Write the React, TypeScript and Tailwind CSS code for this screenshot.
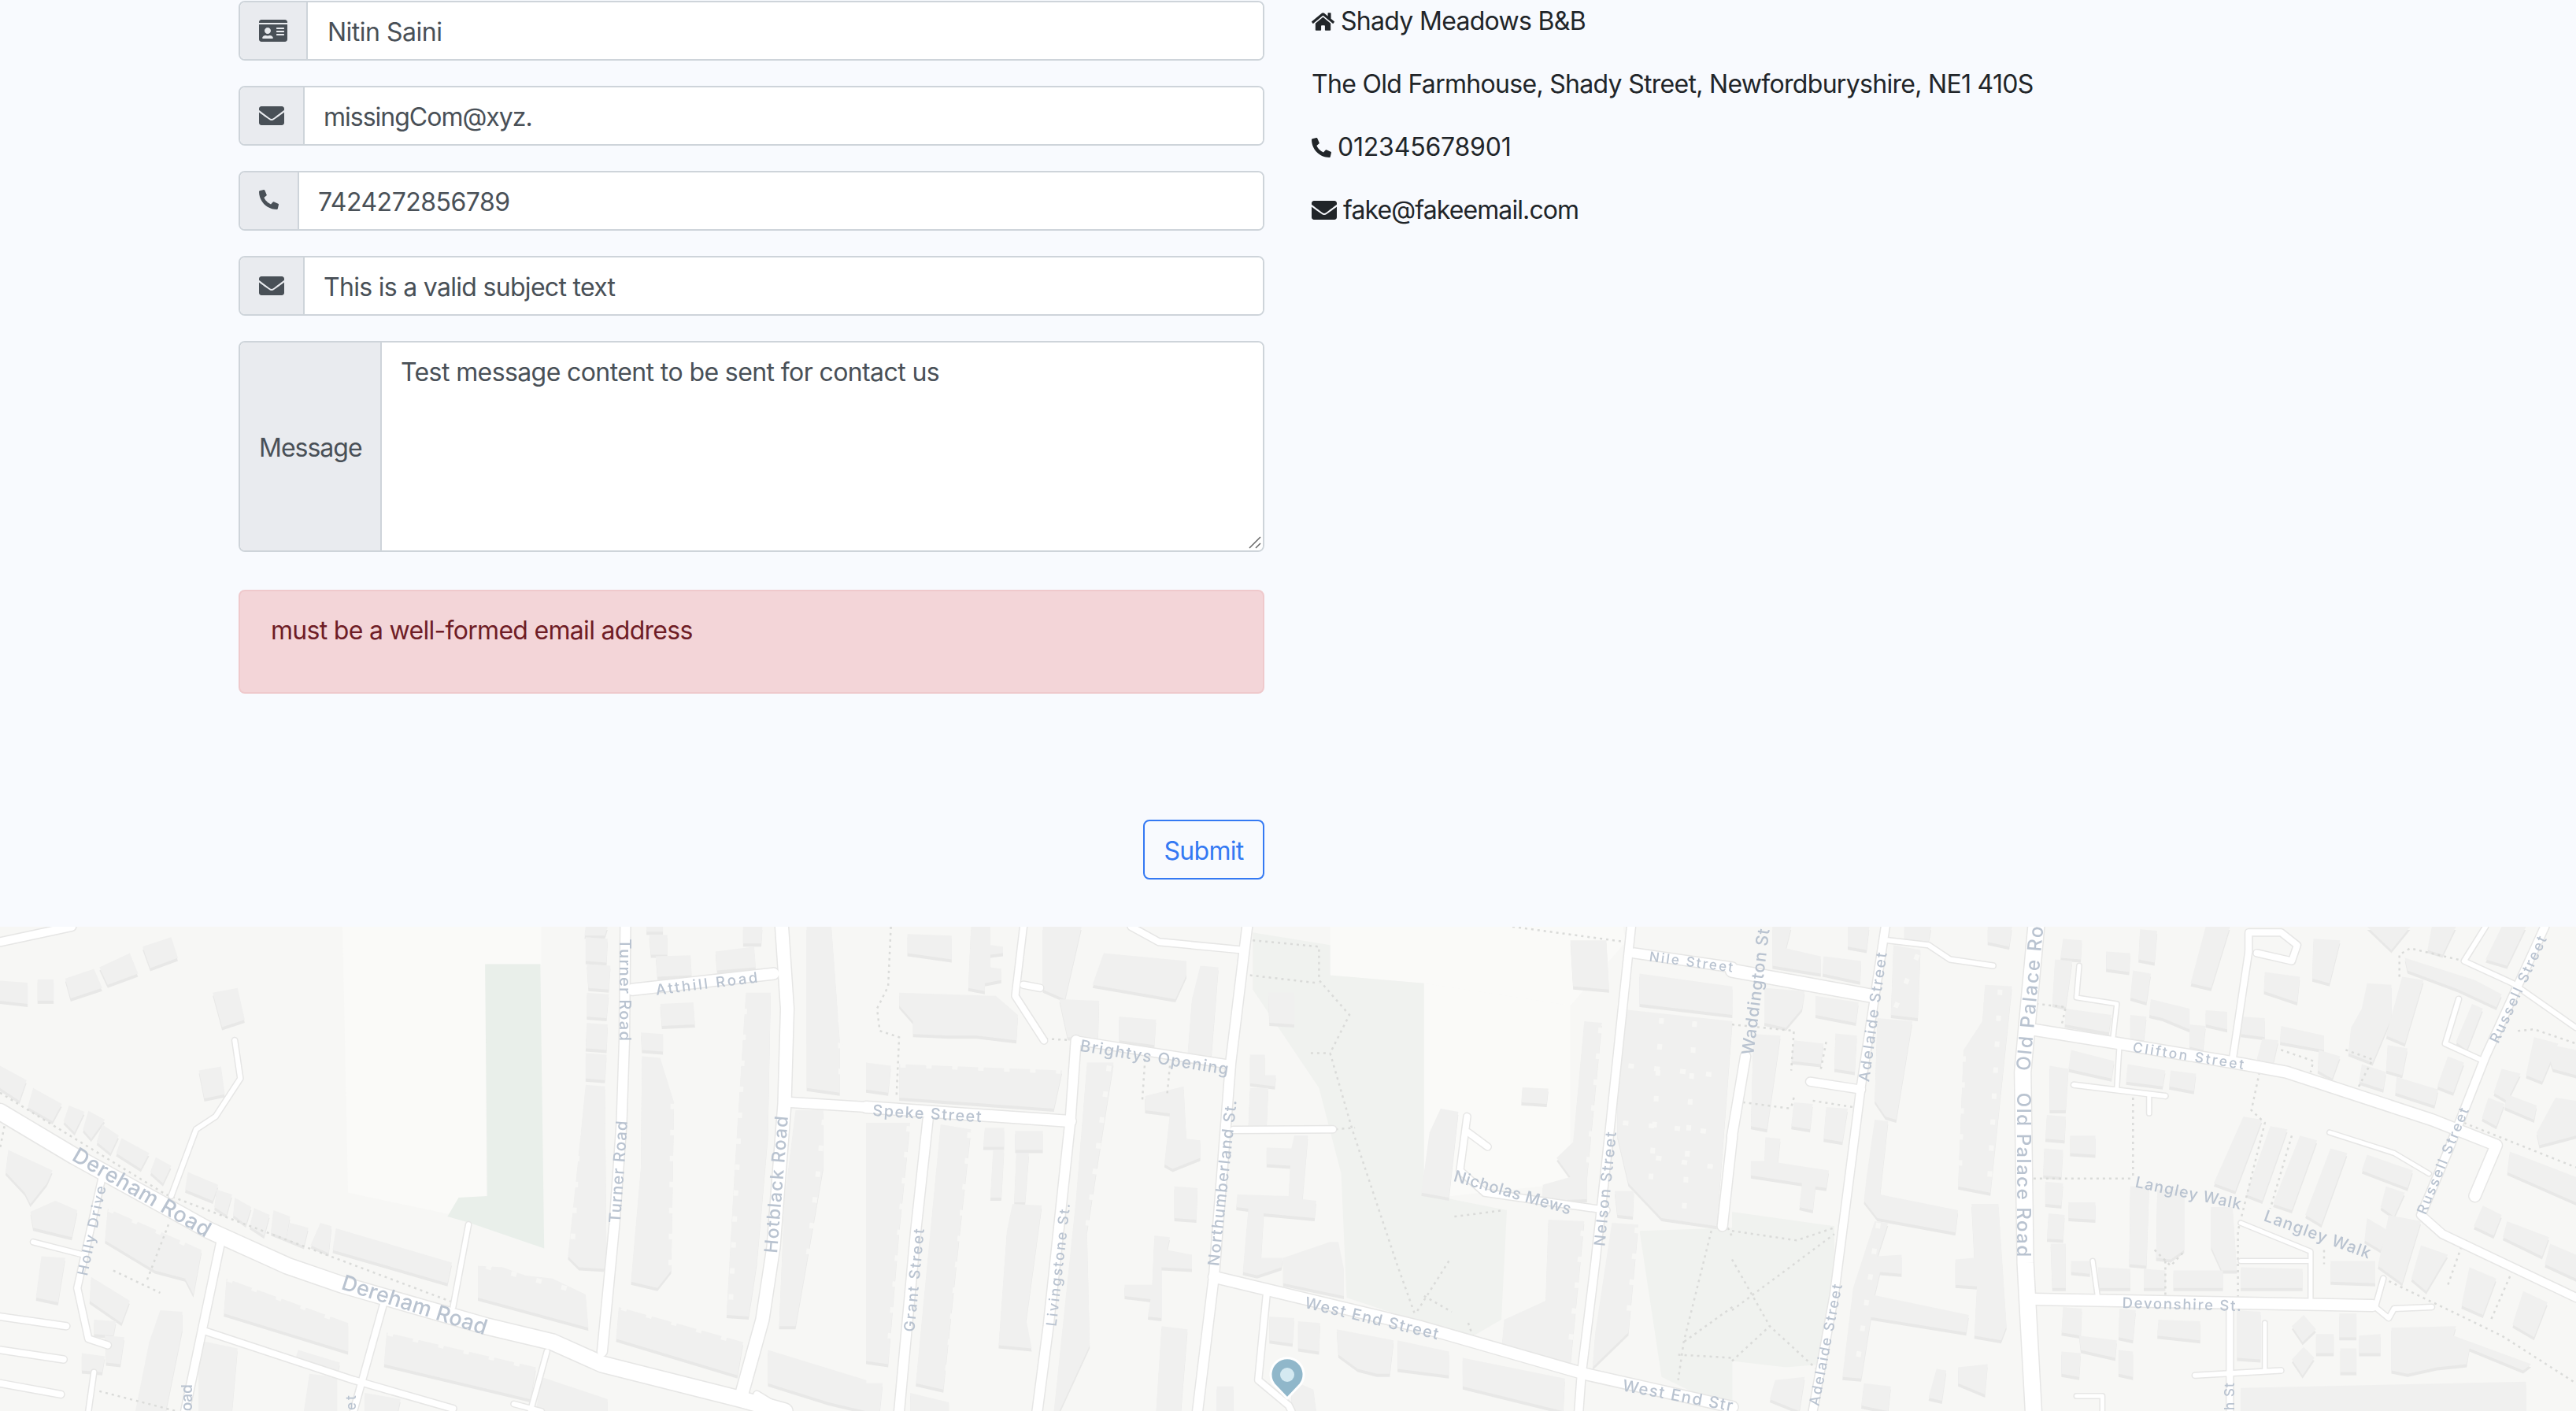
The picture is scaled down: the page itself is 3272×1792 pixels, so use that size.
import { FaEnvelope, FaHome, FaIdCard, FaPhoneAlt } from "react-icons/fa";

type Panel = {
  x0: number;
  sx: number;
  light: string[];
  green: string[];
  blocks: string[];
  notches: string[];
  dots: string[];
  roads: [number, string][];
  labels: [string, number, number, number, number][];
};

const SY = 2.48;

const panels: Panel[] = [
  {
    x0: 0,
    sx: 1.425,
    light: ["620 42 980 42 980 160 880 160 880 890 820 950 630 880"],
    green: ["878 160 978 160 985 1055 850 975 810 955 830 895 882 890"],
    blocks: [
      "0 212 50 218 50 285 0 275", "68 208 97 208 97 275 68 275", "118 205 170 175 185 235 128 268", "180 170 235 125 250 190 195 225",
      "258 105 310 75 322 140 272 172", "385 250 430 235 443 335 402 358", "360 495 400 482 407 570 370 583",
      "0 480 48 525 35 590 0 550", "60 550 112 600 95 655 50 610", "125 605 153 625 135 690 115 655", "160 622 190 650 165 710 150 680",
      "185 665 215 700 200 755 175 720", "220 708 270 755 255 805 210 755", "282 768 310 795 295 850 272 815", "340 815 395 855 385 905 335 870",
      "392 870 420 885 410 950 388 925", "425 895 455 925 445 980 422 950", "460 928 488 950 478 1015 452 985", "495 935 525 955 518 1025 490 1005",
      "525 975 558 990 550 1048 518 1025", "580 975 600 985 595 1070 562 1045", "608 992 818 1100 810 1165 602 1060",
      "15 745 95 810 85 850 55 915 45 880 10 815", "55 940 100 905 140 935 130 1020 60 990", "195 930 365 1060 350 1200 335 1150 280 1125 190 1030",
      "75 1080 118 1085 105 1225 65 1210", "165 1145 235 1220 220 1290 162 1220", "290 1250 330 1255 330 1310 300 1568 245 1568 270 1350",
      "410 1150 630 1290 630 1380 405 1260", "540 1375 615 1415 612 1445 535 1400", "700 1320 970 1430 960 1530 695 1420", "980 1460 1100 1530 1100 1568 970 1568",
      "360 1345 430 1370 420 1568 360 1568", "148 1385 190 1395 185 1445 148 1440", "170 1280 210 1285 205 1330 170 1325", "190 1330 225 1335 218 1420 192 1415",
      "560 1450 610 1460 610 1568 550 1568", "660 1510 725 1530 720 1568 660 1568",
      "1060 42 1100 42 1095 70 1058 70", "1060 75 1100 80 1098 155 1060 150", "1062 160 1105 165 1102 240 1065 235", "1062 250 1102 255 1098 330 1062 325",
      "1062 345 1100 350 1098 430 1060 425", "1060 440 1098 445 1095 525 1060 520", "1060 540 1095 545 1098 1120 1048 1115 1028 1080 1045 800",
      "1160 375 1200 380 1200 435 1162 430", "1162 450 1195 455 1220 595 1215 1125 1190 1180 1142 1160 1160 800", "1195 285 1255 280 1258 350 1198 355",
      "1187 135 1250 132 1252 195 1190 200", "1295 120 1365 105 1368 170 1298 180", "1175 68 1208 68 1208 130 1178 130", "1170 42 1200 42 1200 58 1170 58",
      "1345 42 1380 42 1378 95 1345 95", "1350 250 1395 250 1390 700 1370 1100 1355 1270 1315 1265 1330 800", "1460 42 1505 42 1520 400 1520 565 1460 550",
      "1440 620 1490 620 1490 800 1460 1100 1440 1300 1410 1300 1420 900", "865 1110 910 1115 950 1140 1000 1150 1060 1200 1065 1305 865 1210",
      "1120 1240 1345 1350 1335 1455 1115 1340", "1390 1375 1568 1470 1568 1568 1500 1540 1390 1480",
    ],
    notches: [
      "1050 600 1035 1080", "1218 600 1214 1120", "1348 300 1322 1250", "1520 80 1522 560", "1492 650 1462 1090",
      "880 1112 1060 1198", "1125 1242 1340 1352", "197 932 362 1062", "412 1152 628 1292", "702 1322 968 1432",
    ],
    dots: ["0 565 300 885 820 1225", "305 980 265 1160", "205 1125 290 1195", "8 670 0 740", "180 1505 320 1568"],
    roads: [
      [20, "0 625 135 765 380 1000 520 1110 620 1170 880 1300 1000 1350 1090 1420 1340 1530 1420 1568"],
      [10, "0 90 130 42"],
      [12, "1132 42 1130 400 1125 660 1112 980 1090 1380"],
      [14, "1145 240 1400 190"],
      [16, "1415 42 1425 300 1420 600 1400 1050 1380 1280 1340 1530"],
      [12, "1430 595 1568 610"],
      [6, "425 400 435 520 390 640 355 680 310 890"],
      [6, "848 980 820 1240"],
      [8, "185 830 140 1180 160 1340 195 1360"],
      [6, "60 1035 150 1075"],
      [10, "400 1030 335 1568"],
      [8, "370 1315 640 1470 820 1560"],
      [8, "695 1225 640 1568"],
      [6, "990 1380 960 1568"],
      [8, "0 1270 120 1300"],
      [8, "0 1375 115 1405"],
      [8, "0 1480 110 1515"],
      [6, "170 1445 160 1568"],
      [6, "930 1545 980 1568"],
      [8, "1370 1515 1420 1568"],
    ],
    labels: [
      ["Turner Road", 1132, 80, 1132, 400],
      ["Atthill Road", 1187, 240, 1370, 200],
      ["Turner Road", 1112, 975, 1125, 655],
      ["Hotblack Road", 1395, 1070, 1415, 640],
      ["Dereham Road", 135, 755, 378, 1000],
      ["Dereham Road", 620, 1160, 880, 1305],
      ["Holly Drive", 148, 1140, 182, 860],
      ["oad", 338, 1568, 338, 1485],
      ["et", 635, 1565, 635, 1520],
    ],
  },
  {
    x0: 1100,
    sx: 1.425,
    light: ["840 42 1370 42 1375 90 1275 290 1010 220 840 195", "1010 220 1275 290 1275 850 1060 890 1010 880"],
    green: [
      "700 60 840 100 840 195 1010 220 1010 880 1060 900 1160 935 1150 1280 1100 1330 990 1280 870 1210 860 820 820 550 700 240",
      "1400 1000 1568 990 1568 1568 1440 1460",
    ],
    blocks: [
      "75 65 155 70 155 145 75 125", "190 42 225 42 225 100 248 105 248 125 225 130 225 170 245 175 245 210 215 220 215 245 185 235", "320 42 390 42 360 270 320 240",
      "430 125 580 150 580 195 560 270 410 225", "60 250 235 260 275 320 272 400 200 385 150 385 85 380 85 340 60 290", "350 270 422 275 420 400 365 390",
      "458 325 525 335 522 415 458 400", "605 165 638 170 625 450 582 445 590 270", "60 475 355 495 340 615 60 580", "0 470 45 480 40 565 0 555",
      "0 660 80 660 60 1000 40 1420 0 1410", "135 665 190 680 170 1000 140 1500 90 1480", "215 675 250 675 250 735 212 735", "270 685 320 685 320 745 270 745",
      "230 745 250 745 245 895 225 895", "272 755 295 755 288 910 268 910", "265 915 318 920 290 1280 300 1370 240 1360 255 1000",
      "400 470 448 470 400 1000 405 1360 350 1568 340 1568 380 900", "505 575 575 545 580 710 605 715 605 770 555 805 540 790 550 630 505 620",
      "558 860 600 865 598 965 558 960", "522 1015 550 1020 545 1060 590 1075 590 1120 535 1115 535 1275 510 1270 515 1215 468 1205 468 1170 518 1170",
      "535 1300 582 1310 570 1568 525 1568", "695 445 722 445 722 510 742 510 740 545 695 535", "695 550 728 550 725 670 692 670", "728 250 775 250 775 350 730 345",
      "725 738 770 740 775 700 800 700 790 900 815 905 812 960 720 945 715 1085 755 1085 752 1115 708 1140 682 1130 692 930 670 925 672 885 765 890 768 795 725 790",
      "755 1085 840 1035 855 1035 865 1120 865 1205 755 1165", "730 1270 775 1275 772 1355 730 1345", "782 1285 822 1290 820 1380 782 1370",
      "852 1310 955 1345 948 1450 925 1450 890 1435 855 1390", "962 1345 1055 1380 1055 1455 962 1435", "1080 1400 1265 1465 1262 1568 1080 1490",
      "1188 548 1235 552 1232 600 1186 595", "1300 340 1332 345 1305 830 1305 900 1225 905 1225 855 1275 830 1250 770 1280 720", "1040 615 1072 625 1055 895 1005 880 1020 690",
      "1275 85 1340 85 1345 240 1280 230", "1400 190 1568 230 1568 320 1400 285", "1360 300 1568 340 1540 985 1440 960 1380 850 1360 700", "1355 875 1390 875 1388 955 1360 950",
      "1235 965 1300 970 1275 1420 1150 1380 1155 1280 1230 1220", "1350 975 1398 980 1380 1320 1315 1430 1320 1320", "635 1490 665 1490 665 1568 635 1568",
      "0 1480 30 1480 25 1568 0 1568", "80 1510 150 1540 150 1568 80 1568", "770 1470 810 1500 815 1568 770 1568",
    ],
    notches: [
      "440 480 400 1000", "188 690 145 1480", "78 670 40 1400", "62 478 352 498", "1298 1000 1272 1400", "1396 990 1378 1300", "1330 360 1306 820",
      "1440 330 1420 850", "1500 340 1480 960", "1380 480 1540 510", "1370 660 1540 690", "1430 770 1540 800",
    ],
    dots: [
      "700 85 820 105 820 210 875 320 840 440 880 680 960 1100 995 1270", "695 195 820 220", "805 440 840 440", "850 680 885 675", "1065 955 1155 935",
      "1055 1095 995 1260", "1010 1205 1060 1255", "1090 1290 1100 1340", "1170 42 1375 90", "45 42 40 230 20 300 25 370 60 390 55 580", "325 395 380 400",
      "505 460 500 590", "550 480 545 570", "1530 1000 1480 1350 1470 1470", "1568 1240 1480 1350", "1470 1390 1568 1400", "1560 990 1568 1020",
    ],
    roads: [
      [8, "285 42 270 260 322 400"],
      [8, "285 225 315 235"],
      [8, "480 42 530 90 680 115"],
      [12, "690 42 660 470 630 1140 600 1568"],
      [10, "380 400 655 475"],
      [12, "380 400 370 650 330 1300 310 1568"],
      [14, "0 610 370 655"],
      [12, "112 650 90 1000 60 1568"],
      [8, "665 682 845 680"],
      [14, "630 1145 1000 1300 1300 1450 1568 1555"],
      [8, "725 1200 710 1470 765 1550 770 1568"],
      [8, "1088 640 1075 810 1120 880 1340 935"],
      [8, "1090 690 1125 735"],
      [10, "1385 42 1345 700 1320 1100 1295 1450 1290 1568"],
      [12, "1390 125 1568 170"],
      [12, "1568 700 1550 985"],
    ],
    labels: [
      ["Brightys Opening", 388, 415, 655, 490],
      ["Speke Street", 12, 620, 208, 640],
      ["Northumberland St.", 628, 1110, 660, 590],
      ["Livingstone St.", 335, 1300, 360, 915],
      ["Grant Street", 78, 1318, 96, 995],
      ["Nicholas Mews", 1065, 825, 1275, 930],
      ["West End Street", 795, 1225, 1035, 1325],
      ["West End Str", 1370, 1485, 1568, 1550],
      ["Nelson Street", 1327, 1048, 1348, 690],
      ["Nile Street", 1418, 135, 1568, 170],
    ],
  },
  {
    x0: 2200,
    sx: 1.4627,
    light: [],
    green: ["0 940 190 985 190 1200 170 1420 100 1430 0 1410"],
    blocks: [
      "75 42 110 42 100 110 165 135 165 190 75 165", "215 42 255 42 250 115 215 105", "170 135 240 150 238 215 168 190", "320 42 370 42 365 90 320 80", "475 42 520 42 515 105 475 90",
      "60 235 135 245 130 300 100 360 60 345", "155 260 235 280 230 345 155 320", "300 100 350 115 345 330 295 320", "470 225 520 230 480 880 420 860 430 430 465 340",
      "40 380 90 385 65 680 35 670", "115 400 170 410 165 475 110 465", "192 378 232 385 228 500 190 490", "270 330 335 340 305 650 285 640 265 590", "115 595 150 600 145 680 110 670",
      "175 610 215 615 205 720 170 710", "62 705 90 710 85 785 180 810 175 865 155 860 150 935 125 925 130 850 35 825 35 780 60 780",
      "265 650 290 655 275 885 420 935 415 1005 270 960 245 905 250 830", "445 915 495 915 510 1300 500 1345 450 1330 455 1175 415 1170 415 1090 450 1085",
      "265 970 290 975 270 1080 315 1075 315 1135 275 1130 265 1200 240 1465 205 1460 225 1180", "258 1200 440 1265 435 1320 252 1270", "380 1435 398 1440 390 1535 365 1525",
      "420 1430 475 1420 470 1515 420 1480", "80 1470 135 1460 125 1568 70 1530", "245 1480 295 1490 290 1568 240 1550",
      "615 80 650 85 648 145 610 140", "600 145 632 150 620 295 595 285", "620 300 705 320 700 375 618 350", "695 120 740 125 738 185 695 175", "758 50 790 55 785 155 755 145",
      "745 180 778 190 770 280 740 265", "778 270 850 300 850 365 800 330 775 320", "880 42 925 42 890 235 852 220", "880 305 920 310 920 365 880 350", "740 320 770 325 765 400 740 395",
      "850 350 880 355 875 430 850 420", "945 325 990 330 990 390 945 380", "985 395 1015 400 1005 475 975 460", "1020 355 1100 385 1100 430 1018 405", "1090 430 1130 450 1115 520 1088 495",
      "1080 80 1130 85 1110 220 1078 205", "990 185 1055 200 1050 280 988 245", "1180 42 1260 42 1225 115", "630 430 710 465 705 520 625 490", "735 475 805 495 800 545 732 530",
      "815 495 862 505 858 560 812 545", "590 480 625 490 620 620 590 620", "585 635 620 640 618 715 582 710", "628 700 675 700 675 760 628 755", "580 740 615 745 612 830 578 825",
      "582 845 615 850 612 920 582 915", "625 910 675 910 675 965 625 960", "588 945 618 950 615 1028 585 1025", "592 1040 620 1040 620 1180 595 1180", "630 1095 665 1095 665 1135 630 1130",
      "680 1115 740 1120 740 1180 680 1180", "765 1120 805 1125 805 1180 765 1180", "820 1125 912 1125 912 1180 820 1180", "945 1115 1060 1120 1060 1180 945 1180", "1112 1095 1195 1095 1195 1165 1112 1160",
      "740 860 775 860 770 1110 738 1105", "790 870 840 870 840 1060 815 1090 788 1085", "890 925 930 925 938 1125 910 1125 890 1050", "950 640 985 650 935 875 895 850", "1000 670 1032 680 985 905 955 885",
      "1055 700 1087 715 1040 935 1005 915", "1112 740 1143 755 1095 980 1065 950", "1180 760 1265 810 1255 865 1170 810", "1215 860 1250 880 1230 955 1205 925", "1220 950 1280 970 1245 1165 1200 1110",
      "1180 960 1220 1000 1205 1060 1175 1030", "1250 140 1380 210 1430 255 1420 295 1350 240 1255 180", "1180 220 1225 225 1225 330 1190 470 1145 440 1150 360 1170 300", "1245 200 1285 210 1250 410 1215 385",
      "1218 415 1255 425 1245 510 1215 495", "1170 475 1215 500 1210 555 1165 530", "1235 515 1312 555 1305 605 1232 565", "1330 450 1360 470 1340 565 1310 545", "1300 42 1345 42 1320 130 1292 115",
      "1375 285 1395 300 1365 430 1345 405", "1430 42 1475 42 1440 165 1400 145", "1490 390 1535 410 1505 530 1475 510", "1430 490 1465 505 1440 590 1415 565", "1440 570 1495 605 1490 650 1435 610",
      "1405 580 1435 600 1420 670 1393 645", "1530 580 1568 590 1568 700 1500 730 1495 690", "1445 750 1568 830 1568 910 1440 815", "1510 410 1568 430 1568 510 1525 490", "1395 920 1430 950 1415 1015 1378 985",
      "1440 970 1518 1020 1505 1080 1432 1020", "1520 1040 1568 1075 1568 1150 1510 1105", "1280 1045 1330 1075 1290 1190 1262 1150", "1370 1115 1420 1150 1395 1265 1355 1235", "1470 1190 1515 1225 1490 1335 1450 1295",
      "615 1240 650 1245 648 1330 612 1320", "720 1245 750 1250 745 1345 718 1335", "792 1280 870 1285 870 1345 790 1330", "645 1330 715 1345 712 1400 648 1375", "612 1380 648 1385 645 1460 612 1450",
      "718 1375 745 1380 745 1460 718 1450", "938 1250 982 1255 982 1405 938 1400", "1062 1265 1085 1310 1060 1350 1040 1300", "1085 1325 1118 1325 1118 1385 1085 1385", "1062 1365 1082 1400 1060 1455 1040 1405",
      "1128 1260 1160 1260 1160 1335 1128 1335", "1130 1370 1160 1370 1160 1445 1130 1445", "1165 1330 1205 1325 1205 1385 1165 1385", "1225 1305 1345 1300 1340 1330 1485 1420 1470 1440 1370 1370 1365 1420 1310 1430 1255 1450 1225 1440",
      "945 1495 1475 1475 1475 1568 945 1568",
    ],
    notches: ["345 130 298 320", "498 240 478 850", "272 975 230 1450", "430 450 422 850"],
    dots: [
      "0 350 115 370 110 495", "175 405 165 490", "20 595 110 615", "115 580 110 610", "150 590 225 610", "565 285 620 295 612 355", "745 580 745 830", "560 835 745 835",
      "965 470 980 500 965 620 990 660 940 1000 940 1250", "1020 430 1080 465 1075 500", "1140 430 1190 460 1160 560", "1240 200 1240 130 1260 110 1360 150", "1460 370 1490 365 1568 410",
      "1360 660 1568 800", "1210 1150 1430 1330 1568 1480", "805 1095 805 1215", "785 1060 815 1110 840 1065", "1100 1060 1100 1105", "1450 1125 1410 1280", "1355 1050 1330 1170",
      "0 1000 120 1030 190 990", "0 1090 70 1300 160 1440", "0 1250 190 1010", "0 1410 70 1300", "1040 700 1000 930",
    ],
    roads: [
      [12, "25 450 0 700"],
      [10, "285 42 240 540 190 1200 150 1568"],
      [16, "0 180 260 260"],
      [6, "290 85 365 100 405 145 485 165"],
      [10, "145 530 240 555"],
      [20, "565 42 540 500 545 1100 560 1568"],
      [14, "555 365 720 410 950 475 1030 500 1300 650 1420 730 1380 890"],
      [5, "720 410 715 550"],
      [6, "635 540 805 575"],
      [5, "775 575 775 630"],
      [5, "645 165 640 265 715 285 708 390"],
      [8, "960 120 930 460"],
      [8, "960 120 960 60 1020 60 1050 100 1040 150 975 125"],
      [10, "1510 42 1400 450 1330 750 1280 950 1320 1010 1568 1210"],
      [6, "1400 42 1360 150 1450 220 1568 360"],
      [6, "1350 270 1325 410 1390 460"],
      [5, "1110 690 1230 755 1295 820"],
      [5, "945 975 1075 1065 1075 1220"],
      [5, "945 1095 1070 1095"],
      [14, "560 1215 1190 1235"],
      [6, "1210 1150 1195 1240 1220 1275 1230 1245 1300 1240"],
      [5, "670 1095 680 1215"],
      [8, "925 1235 925 1568"],
      [6, "860 1455 1020 1440"],
      [5, "990 1290 990 1440"],
      [5, "640 1520 688 1520 688 1568"],
    ],
    labels: [
      ["Waddington St", 28, 445, 58, 50],
      ["Adelaide Street", 245, 530, 278, 125],
      ["Adelaide Street", 152, 1550, 195, 1170],
      ["Old Palace Road", 542, 565, 542, 1080],
      ["Old Palace Ro", 540, 495, 565, 42],
      ["Clifton Street", 745, 420, 950, 475],
      ["Russell Street", 1280, 945, 1360, 615],
      ["Russell Street", 1415, 405, 1505, 75],
      ["Langley Walk", 750, 845, 945, 915],
      ["Langley Walk", 990, 950, 1185, 1070],
      ["Devonshire St.", 725, 1225, 945, 1235],
      ["h St", 925, 1565, 925, 1480],
    ],
  },
];

// zoomed-crop coordinates back to page pixels
const toPoints = (p: Panel, s: string) => {
  const n = s.split(" ").map(Number);
  const out: string[] = [];
  for (let i = 0; i < n.length; i += 2) {
    out.push(`${(p.x0 + n[i] / p.sx).toFixed(1)},${(1160 + n[i + 1] / SY).toFixed(1)}`);
  }
  return out.join(" ");
};

const MapLabel = ({ p, l }: { p: Panel; l: Panel["labels"][number] }) => {
  const x1 = p.x0 + l[1] / p.sx;
  const y1 = 1160 + l[2] / SY;
  const x2 = p.x0 + l[3] / p.sx;
  const y2 = 1160 + l[4] / SY;
  const angle = (Math.atan2(y2 - y1, x2 - x1) * 180) / Math.PI;
  const len = Math.hypot(x2 - x1, y2 - y1);
  const size = Math.min(27, Math.max(17, len / l[0].length / 0.58));
  return (
    <text
      transform={`translate(${(x1 + x2) / 2} ${(y1 + y2) / 2}) rotate(${angle})`}
      textAnchor="middle"
      dominantBaseline="central"
      textLength={len}
      style={{ fontSize: size }}
      className="fill-[#b9c3d0] font-medium font-['Inter',sans-serif]"
    >
      {l[0]}
    </text>
  );
};

const MapView = () => (
  <svg viewBox="0 1177 3272 615" className="block w-full h-[615px] bg-[#f7f7f5]">
    <g className="blur-[0.7px]">
      {panels.map((p) => p.light.map((s) => <polygon key={s} points={toPoints(p, s)} fill="#fafaf8" />))}
      {panels.map((p) =>
        p.green.map((s, i) => <polygon key={s} points={toPoints(p, s)} fill={p.x0 === 0 && i === 0 ? "#e9efea" : "#f0f2ef"} />),
      )}
      {panels.map((p) =>
        p.blocks.map((s) => <polygon key={s} points={toPoints(p, s)} fill="#e8e8e7" transform="translate(0 4)" />),
      )}
      {panels.map((p) => p.blocks.map((s) => <polygon key={s} points={toPoints(p, s)} fill="#f0f0ef" />))}
      {panels.map((p) =>
        p.notches.map((s) => (
          <polyline key={s} points={toPoints(p, s)} fill="none" stroke="#f7f7f5" strokeWidth="6" strokeDasharray="7 26" />
        )),
      )}
      {panels.map((p) =>
        p.dots.map((s) => (
          <polyline key={s} points={toPoints(p, s)} fill="none" stroke="#dadbd9" strokeWidth="2.5" strokeDasharray="3 5" />
        )),
      )}
      {panels.map((p) =>
        p.roads.map(([w, s]) => (
          <polyline
            key={s}
            points={toPoints(p, s)}
            fill="none"
            stroke="#e6e6e5"
            strokeWidth={w + 3}
            strokeLinecap="round"
            strokeLinejoin="round"
          />
        )),
      )}
      {panels.map((p) =>
        p.roads.map(([w, s]) => (
          <polyline
            key={s}
            points={toPoints(p, s)}
            fill="none"
            stroke="#ffffff"
            strokeWidth={w}
            strokeLinecap="round"
            strokeLinejoin="round"
          />
        )),
      )}
      {panels.map((p) => p.labels.map((l) => <MapLabel key={l.join()} p={p} l={l} />))}
    </g>
    {/* pin */}
    <path
      d="M1635 1776 L1618 1758 A21 21 0 1 1 1652 1758 Z"
      fill="#90b7ca"
      stroke="#ffffff"
      strokeWidth="3"
      strokeLinejoin="round"
    />
    <circle cx="1635" cy="1746" r="9" fill="#d4e9f1" />
  </svg>
);

const Field = ({
  icon,
  width,
  value,
  textLeft,
}: {
  icon: React.ReactNode;
  width: string;
  value: string;
  textLeft: string;
}) => (
  <div className="flex h-[76px] rounded-lg border-2 border-[#ced4da] bg-white overflow-hidden">
    <div className={`flex items-center pl-6 shrink-0 bg-[#e9ebef] border-r-2 border-[#ced4da] text-[#495057] ${width}`}>{icon}</div>
    <input readOnly defaultValue={value} className={`flex-1 min-w-0 pt-1 bg-white text-[#495057] outline-none ${textLeft}`} />
  </div>
);

const App = () => {
  return (
    <div className="w-[3272px] h-[1792px] overflow-hidden bg-[#f8fafe] font-['Inter',sans-serif] text-[32px] leading-[48px] tracking-[-0.7px] text-[#212529]">
      <div className="flex h-[1177px] pt-px pl-[303px] gap-[60px]">
        <div className="w-[1303px] flex flex-col">
          <div className="flex flex-col gap-8">
            <Field icon={<FaIdCard className="w-9 h-8" />} width="w-[86px]" textLeft="pl-[25px] tracking-[-0.5px]" value="Nitin Saini" />
            <Field icon={<FaEnvelope className="w-8 h-8" />} width="w-[82px]" textLeft="pl-[24px] tracking-[-1px]" value="missingCom@xyz." />
            <Field icon={<FaPhoneAlt className="w-[25px] h-[25px] -mt-[3px]" />} width="w-[75px]" textLeft="pl-[24px] tracking-[-0.5px]" value="7424272856789" />
            <Field icon={<FaEnvelope className="w-8 h-8" />} width="w-[82px]" textLeft="pl-[24px]" value="This is a valid subject text" />
            <div className="relative flex h-[268px] rounded-lg border-2 border-[#ced4da] bg-white overflow-hidden">
              <div className="flex items-center pl-6 pt-1 shrink-0 w-[180px] bg-[#e9ebef] border-r-2 border-[#ced4da] text-[#495057] tracking-[-1px]">
                Message
              </div>
              <textarea
                readOnly
                defaultValue="Test message content to be sent for contact us"
                className="flex-1 min-w-0 px-6 pt-[14px] resize-none bg-white text-[#495057] outline-none tracking-[-0.6px]"
              />
              {/* resize grip */}
              <svg viewBox="0 0 16 16" className="absolute right-[2px] bottom-[2px] w-4 h-4" fill="none" stroke="#666" strokeWidth="1.5">
                <path d="M1 15 L15 1 M9 15 L15 9" />
              </svg>
            </div>
          </div>
          <div className="mt-12 h-[132px] pt-[26px] pl-[39px] rounded-lg border-2 border-[#efc9cc] bg-[#f3d5d8] text-[#6f1d26]">
            must be a well-formed email address
          </div>
          <div className="mt-40 flex justify-end">
            <button className="h-[76px] w-[154px] pt-1 rounded-lg border-2 border-[#3479f3] text-[#3479f3]">Submit</button>
          </div>
        </div>
        <div className="flex flex-col gap-8 pt-[2px]">
          <p className="flex items-center gap-2">
            <FaHome className="w-[29px] h-[29px]" /> Shady Meadows B&amp;B
          </p>
          <p>The Old Farmhouse, Shady Street, Newfordburyshire, NE1 410S</p>
          <p className="flex items-center gap-2 tracking-[-0.2px]">
            <FaPhoneAlt className="w-[25px] h-[25px]" /> 012345678901
          </p>
          <p className="flex items-center gap-2 tracking-[-0.9px]">
            <FaEnvelope className="w-8 h-8" /> fake@fakeemail.com
          </p>
        </div>
      </div>
      <MapView />
    </div>
  );
};

export default App;
